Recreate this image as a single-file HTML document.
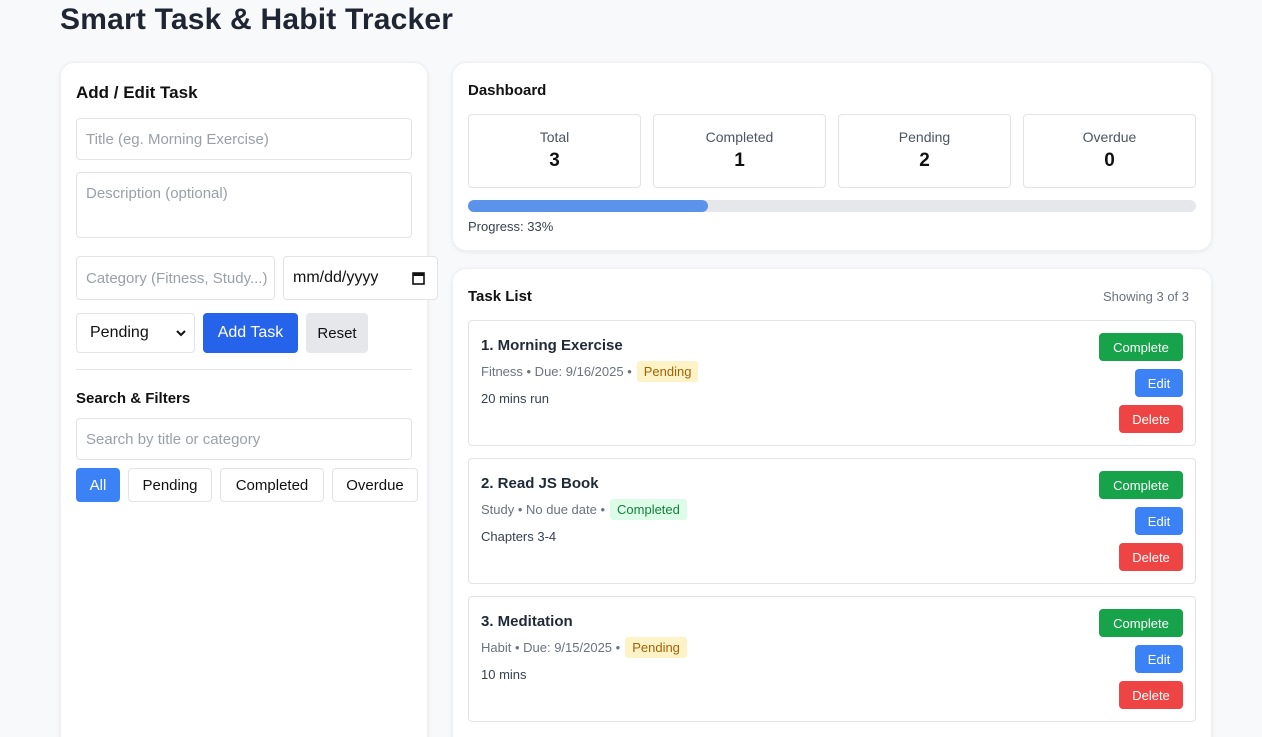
<!DOCTYPE html>
<html><head><meta charset="utf-8"><style>
*{box-sizing:border-box;margin:0;padding:0}
html,body{width:1262px;height:737px;overflow:hidden}
body{background:#f8f9fb;font-family:"Liberation Sans",sans-serif;color:#1f2937;position:relative}
.a{position:absolute}
h1{position:absolute;left:60px;top:3px;font-size:30px;font-weight:bold;color:#1e2533;letter-spacing:0.2px}
.card{position:absolute;background:#fff;border-radius:14px;box-shadow:0 1px 4px rgba(0,0,0,.08);border:1px solid #eef0f3}
.inp{position:absolute;border:1px solid #e0e3e8;border-radius:4px;background:#fff;font-size:15px;color:#9aa0a8;padding-left:9px;display:flex;align-items:center}
.btn{position:absolute;border-radius:4px;display:flex;align-items:center;justify-content:center;font-size:15px}
.stat{position:absolute;top:114px;width:173px;height:74px;border:1px solid #e0e3e8;border-radius:4px;text-align:center}
.stat .l{font-size:14px;color:#4b5563;margin-top:14px}
.stat .v{font-size:19px;font-weight:bold;color:#111;margin-top:5px}
.task{position:absolute;left:468px;width:728px;height:126px;border:1px solid #e0e3e8;border-radius:4px}
.task .t{position:absolute;left:12px;top:16px;font-size:15px;font-weight:bold;color:#1f2937}
.task .m{position:absolute;left:12px;top:40px;font-size:13px;color:#6b7280;display:flex;align-items:center}
.badge{margin-left:5px;padding:3px 7px;border-radius:3px;font-size:13px}
.pend{background:#fef3c7;color:#a16207}
.comp{background:#dcfce7;color:#15803d}
.task .d{position:absolute;left:12px;top:70px;font-size:13px;color:#374151}
.sb{position:absolute;right:12px;height:28px;border-radius:4px;color:#fff;font-size:13px;display:flex;align-items:center;justify-content:center}
.g{top:12px;width:84px;background:#16a34a}
.b{top:48px;width:48px;background:#3b82f6}
.r{top:84px;width:64px;background:#ef4444}
</style></head><body>
<h1>Smart Task &amp; Habit Tracker</h1>
<div class="card" style="left:60px;top:62px;width:368px;height:700px"></div>
<div class="a" style="left:76px;top:83px;font-size:17px;font-weight:bold;color:#111">Add / Edit Task</div>
<div class="inp" style="left:76px;top:118px;width:336px;height:42px">Title (eg. Morning Exercise)</div>
<div class="inp" style="left:76px;top:172px;width:336px;height:66px;align-items:flex-start;padding-top:12px">Description (optional)</div>
<div class="inp" style="left:76px;top:256px;width:199px;height:44px;overflow:hidden;white-space:nowrap">Category (Fitness, Study...)</div>
<div class="inp" style="left:283px;top:256px;width:155px;height:44px;color:#111;font-size:16px">mm/dd/yyyy<svg style="position:absolute;right:12px" width="13" height="14" viewBox="0 0 13 14"><rect x="1" y="2" width="11" height="11" fill="none" stroke="#111" stroke-width="1.6"/><rect x="1" y="2" width="11" height="3" fill="#111"/></svg></div>
<div class="inp" style="left:76px;top:313px;width:119px;height:40px;color:#111;font-size:16px;padding-left:13px">Pending<svg style="position:absolute;right:8px" width="10" height="7" viewBox="0 0 10 7"><path d="M1 1l4 4 4-4" fill="none" stroke="#111" stroke-width="2"/></svg></div>
<div class="btn" style="left:203px;top:313px;width:95px;height:40px;background:#2563eb;color:#fff;font-size:16px">Add Task</div>
<div class="btn" style="left:306px;top:313px;width:62px;height:40px;background:#e5e7eb;color:#111">Reset</div>
<div class="a" style="left:76px;top:369px;width:336px;height:1px;background:#e5e7eb"></div>
<div class="a" style="left:76px;top:390px;font-size:15px;font-weight:bold;color:#111">Search &amp; Filters</div>
<div class="inp" style="left:76px;top:418px;width:336px;height:42px">Search by title or category</div>
<div class="btn" style="left:76px;top:468px;width:44px;height:34px;background:#3b82f6;color:#fff">All</div>
<div class="btn" style="left:128px;top:468px;width:84px;height:34px;border:1px solid #e0e3e8;color:#111">Pending</div>
<div class="btn" style="left:220px;top:468px;width:104px;height:34px;border:1px solid #e0e3e8;color:#111">Completed</div>
<div class="btn" style="left:332px;top:468px;width:86px;height:34px;border:1px solid #e0e3e8;color:#111">Overdue</div>

<div class="card" style="left:452px;top:62px;width:760px;height:189px"></div>
<div class="a" style="left:468px;top:82px;font-size:15px;font-weight:bold;color:#111">Dashboard</div>
<div class="stat" style="left:468px"><div class="l">Total</div><div class="v">3</div></div>
<div class="stat" style="left:653px"><div class="l">Completed</div><div class="v">1</div></div>
<div class="stat" style="left:838px"><div class="l">Pending</div><div class="v">2</div></div>
<div class="stat" style="left:1023px"><div class="l">Overdue</div><div class="v">0</div></div>
<div class="a" style="left:468px;top:200px;width:728px;height:12px;border-radius:6px;background:#e5e7eb"><div style="width:240px;height:12px;border-radius:6px;background:#5b93ea"></div></div>
<div class="a" style="left:468px;top:219px;font-size:13px;color:#374151">Progress: 33%</div>

<div class="card" style="left:452px;top:268px;width:760px;height:500px"></div>
<div class="a" style="left:468px;top:288px;font-size:15px;font-weight:bold;color:#111">Task List</div>
<div class="a" style="left:1103px;top:289px;font-size:13px;color:#6b7280">Showing 3 of 3</div>

<div class="task" style="top:320px"><div class="t">1. Morning Exercise</div><div class="m">Fitness • Due: 9/16/2025 • <span class="badge pend">Pending</span></div><div class="d">20 mins run</div><div class="sb g">Complete</div><div class="sb b">Edit</div><div class="sb r">Delete</div></div>
<div class="task" style="top:458px"><div class="t">2. Read JS Book</div><div class="m">Study • No due date • <span class="badge comp">Completed</span></div><div class="d">Chapters 3-4</div><div class="sb g">Complete</div><div class="sb b">Edit</div><div class="sb r">Delete</div></div>
<div class="task" style="top:596px"><div class="t">3. Meditation</div><div class="m">Habit • Due: 9/15/2025 • <span class="badge pend">Pending</span></div><div class="d">10 mins</div><div class="sb g">Complete</div><div class="sb b">Edit</div><div class="sb r">Delete</div></div>
</body></html>
